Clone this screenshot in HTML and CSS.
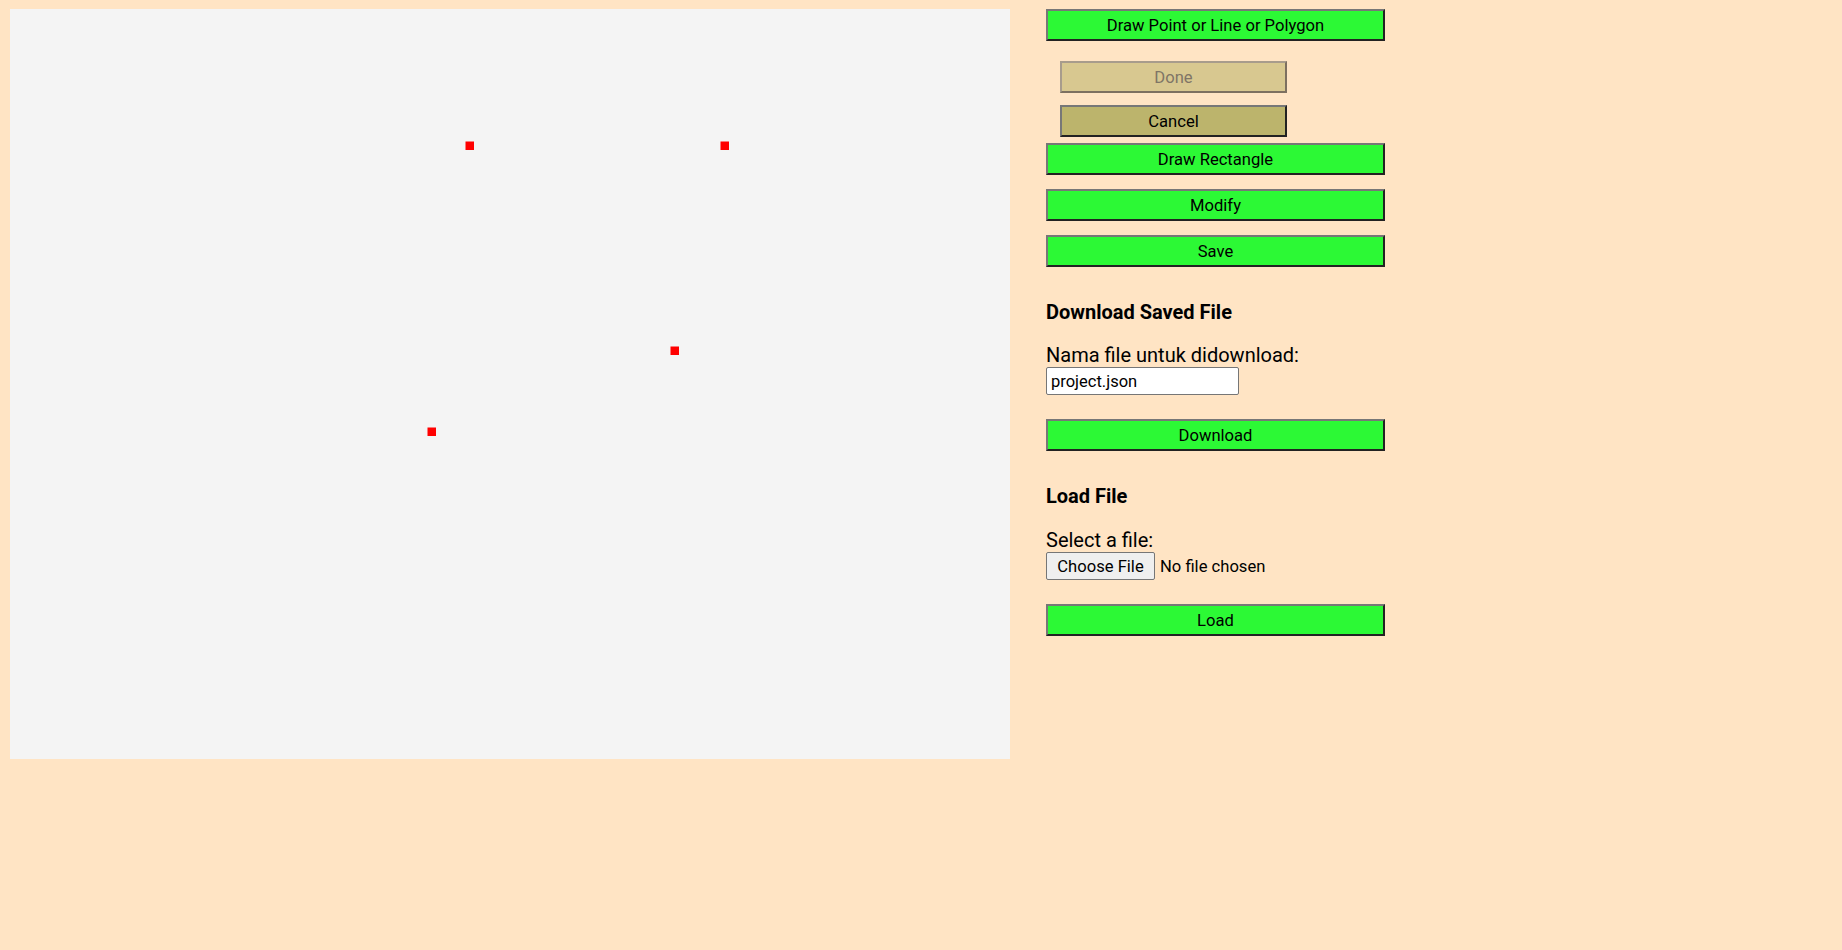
FILE: index.html
```html
<!DOCTYPE html>
<html>
<head>
<meta charset="utf-8">
<title>Draw</title>
<link rel="stylesheet" href="styles.css">
</head>
<body>
<div class="page">
  <div class="canvas">
    <svg class="points" width="1000" height="750" viewBox="0 0 1000 750">
      <rect x="455.5" y="132.5" width="8.5" height="8.5" fill="#ff0000"/>
      <rect x="710.5" y="132.5" width="8.5" height="8.5" fill="#ff0000"/>
      <rect x="660.5" y="337.5" width="8.5" height="8.5" fill="#ff0000"/>
      <rect x="417.5" y="418.5" width="8.5" height="8.5" fill="#ff0000"/>
    </svg>
  </div>
  <div class="panel">
    <button class="btn btn-first">Draw Point or Line or Polygon</button>
    <button class="sub sub-done" disabled>Done</button>
    <button class="sub sub-cancel">Cancel</button>
    <button class="btn btn-rect">Draw Rectangle</button>
    <button class="btn btn-mod">Modify</button>
    <button class="btn btn-save">Save</button>
    <h3 class="heading heading-dl">Download Saved File</h3>
    <label class="label">Nama file untuk didownload:</label>
    <input class="text-input" type="text" value="project.json">
    <button class="btn btn-dl">Download</button>
    <h3 class="heading heading-load">Load File</h3>
    <label class="label">Select a file:</label>
    <div class="file-row">
      <span class="file-btn">Choose File</span>
      <span class="file-name">No file chosen</span>
    </div>
    <button class="btn btn-load">Load</button>
  </div>
</div>
</body>
</html>
```
FILE: styles.css
```css
html, body {
  margin: 0;
  padding: 0;
  background: #ffe4c4;
  font-family: Roboto, "Liberation Sans", sans-serif;
  color: #000;
}

.page {
  display: flex;
  align-items: flex-start;
  padding: 9px 0 0 10px;
  gap: 36px;
}

.canvas {
  width: 1000px;
  height: 750px;
  background: #f4f4f4;
  flex: none;
}

.points {
  display: block;
}

.panel {
  display: flex;
  flex-direction: column;
  align-items: flex-start;
  width: 339px;
}

.btn {
  box-sizing: border-box;
  width: 339px;
  height: 32px;
  padding: 0;
  margin: 0;
  background: #2cf935;
  border-style: solid;
  border-width: 2px;
  border-color: #777777 #222222 #222222 #777777;
  font-family: Roboto, "Liberation Sans", sans-serif;
  font-size: 16.6px;
  color: #000;
}

.sub {
  box-sizing: border-box;
  width: 227px;
  height: 32px;
  margin: 0 0 0 14px;
  padding: 0;
  border-style: solid;
  border-width: 2px;
  font-family: Roboto, "Liberation Sans", sans-serif;
  font-size: 16.6px;
}

.sub-done {
  margin-top: 20px;
  background: #d8c890;
  border-color: #a89c8c #7d7060 #7d7060 #a89c8c;
  color: #7f7566;
}

.sub-cancel {
  margin-top: 12px;
  background: #bcb46c;
  border-color: #777777 #222222 #222222 #777777;
  color: #000;
}

.btn-rect { margin-top: 6px; }
.btn-mod { margin-top: 14px; }
.btn-save { margin-top: 14px; }

.heading {
  margin: 0;
  font-size: 20px;
  font-weight: 700;
  line-height: 22px;
}

.heading-dl { margin-top: 34px; }
.heading-load { margin-top: 34px; }

.label {
  font-size: 20px;
  line-height: 24px;
  margin-top: 20px;
}

.heading-load + .label { margin-top: 21px; }

.text-input {
  box-sizing: border-box;
  width: 193px;
  height: 28px;
  margin: 0;
  padding: 1px 4px;
  border: 1px solid #767676;
  border-radius: 2px;
  background: #fff;
  font-family: Roboto, "Liberation Sans", sans-serif;
  font-size: 16.5px;
  color: #000;
}

.btn-dl { margin-top: 24px; }

.file-row {
  display: flex;
  align-items: center;
  gap: 5px;
  margin-top: 0;
}

.file-btn {
  box-sizing: border-box;
  display: flex;
  align-items: center;
  justify-content: center;
  width: 109px;
  height: 28px;
  background: #efefef;
  border: 1px solid #767676;
  border-radius: 2px;
  font-size: 16.6px;
}

.file-name {
  font-size: 16.6px;
}

.btn-load { margin-top: 24px; }
```
